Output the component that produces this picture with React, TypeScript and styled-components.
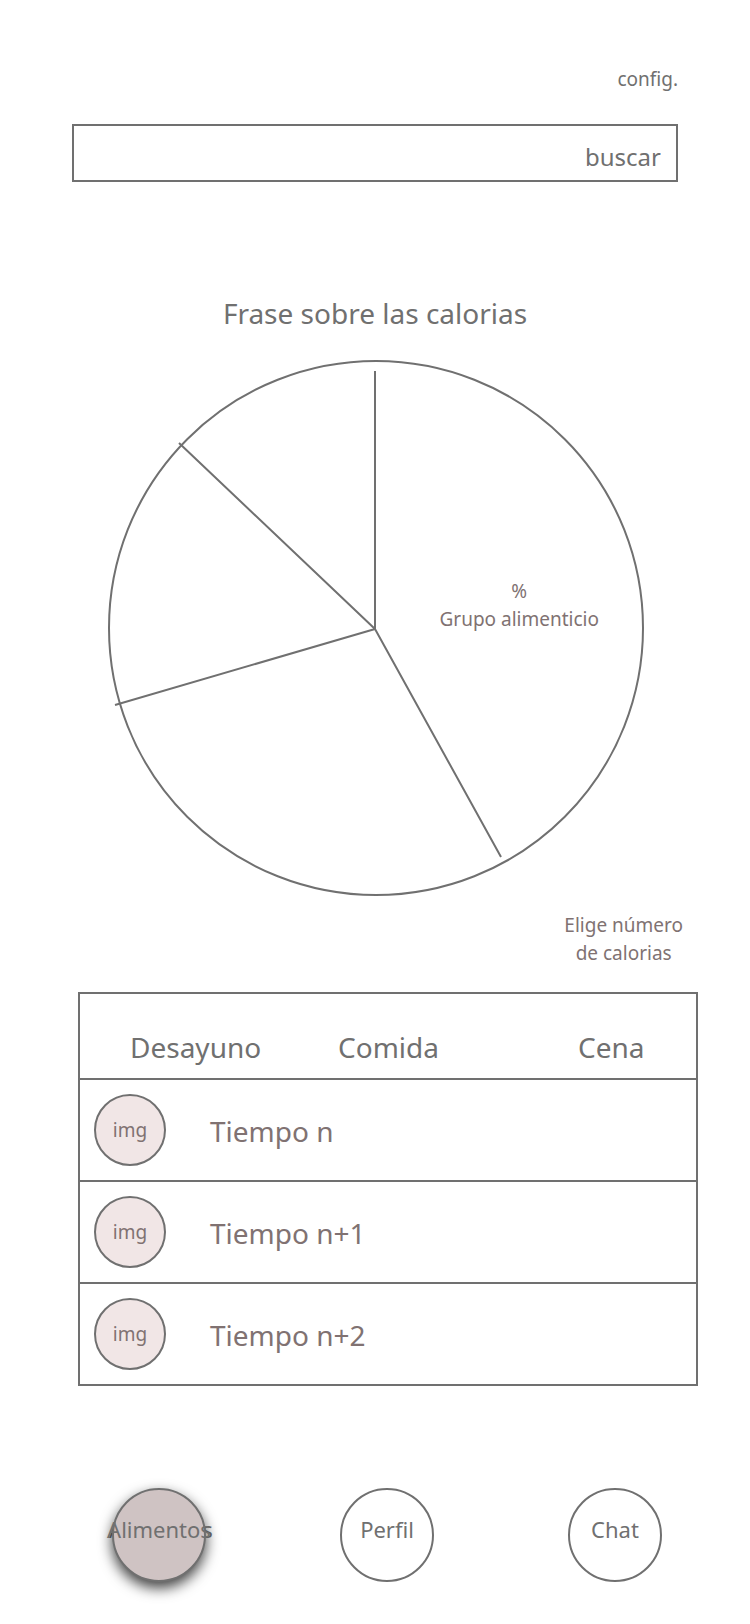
import React from 'react';
import styled, { createGlobalStyle, css } from 'styled-components';

const GREY = '#707070';
const MAUVE = '#807272';
const FONT = "'Noto Sans', 'Open Sans', sans-serif";

const GlobalStyle = createGlobalStyle`
  * { box-sizing: border-box; }
  body {
    margin: 0;
    background: #fff;
    color: ${GREY};
    font-family: ${FONT};
  }
  button {
    padding: 0;
    border: 0;
    background: none;
    color: inherit;
    font: inherit;
    cursor: pointer;
  }
`;

const Page = styled.main`
  display: flex;
  flex-direction: column;
  padding-bottom: 42px;
`;

const Header = styled.header`
  display: flex;
  flex-direction: column;
  gap: 31px;
  padding: 65px 72px 0;
`;

const ConfigLink = styled.a`
  align-self: flex-end;
  color: ${GREY};
  font-size: 19px;
  line-height: 28px;
  text-decoration: none;
`;

const SearchInput = styled.input`
  width: 100%;
  height: 58px;
  padding: 7px 15px 0;
  border: 2px solid ${GREY};
  border-radius: 0;
  background: #fff;
  color: ${GREY};
  font: 24px ${FONT};
  text-align: right;
  outline: none;
  &::placeholder {
    color: ${GREY};
    opacity: 1;
  }
`;

const Title = styled.h1`
  margin: 111px 0 27px;
  font-size: 28px;
  font-weight: 400;
  line-height: 40px;
  text-align: center;
`;

const Pie = styled.figure`
  position: relative;
  align-self: center;
  width: 536px;
  max-width: 100%;
  margin: 0;
`;

const PieDrawing = styled.svg`
  display: block;
  width: 100%;
  overflow: visible;
`;

const PieLabel = styled.figcaption`
  position: absolute;
  top: 217px;
  right: 44px;
  color: ${MAUVE};
  font-size: 19px;
  line-height: 28px;
  text-align: center;
`;

const CaloriesButton = styled.button`
  align-self: flex-end;
  margin: 15px 67px 25px 0;
  && {
    color: ${MAUVE};
    font-size: 19px;
    line-height: 28px;
  }
`;

const Meals = styled.section`
  margin: 0 52px 0 78px;
  border: 2px solid ${GREY};
`;

const MealTabs = styled.div`
  display: grid;
  grid-template-columns: 208fr 240fr 118fr;
  align-items: end;
  height: 84px;
  padding: 0 0 11px 50px;
`;

const MealTab = styled.button`
  justify-self: start;
  && {
    font-size: 28px;
    line-height: 40px;
  }
`;

const TimeList = styled.ul`
  margin: 0;
  padding: 0;
  list-style: none;
`;

const TimeRow = styled.li`
  display: flex;
  align-items: center;
  gap: 44px;
  padding: 14px;
  border-top: 2px solid ${GREY};
  color: ${MAUVE};
  font-size: 28px;
  line-height: 40px;
`;

const TimeName = styled.span`
  padding-top: 2px;
`;

const Thumb = styled.span`
  display: flex;
  align-items: center;
  justify-content: center;
  width: 72px;
  height: 72px;
  border: 2px solid ${GREY};
  border-radius: 50%;
  background: #f1e6e6;
  font-size: 19px;
  line-height: 28px;
`;

const Nav = styled.nav`
  display: flex;
  justify-content: space-between;
  margin-top: 102px;
  padding: 0 88px 0 112px;
`;

/* The active item carries a second copy of its label under the circle,
   seen only past the circle's edge. */
const NavItem = styled.div<{ $active: boolean }>`
  position: relative;
  z-index: 0;
  ${(p) =>
    p.$active &&
    css`
      &::before {
        content: attr(data-label);
        position: absolute;
        inset: 0 0 13px 4px;
        z-index: -1;
        display: flex;
        align-items: center;
        justify-content: center;
        font-size: 22px;
        line-height: 32px;
        white-space: nowrap;
      }
    `}
`;

const NavButton = styled.button<{ $active: boolean }>`
  && {
    display: flex;
    align-items: center;
    justify-content: center;
    width: 94px;
    height: 94px;
    padding-bottom: 13px;
    border: 2px solid ${GREY};
    border-radius: 50%;
    background: ${(p) => (p.$active ? '#cfc3c3' : '#fff')};
    box-shadow: ${(p) => (p.$active ? '0 6px 14px rgba(0, 0, 0, 0.75)' : 'none')};
    font-size: 22px;
    line-height: 32px;
    white-space: nowrap;
  }
`;

const times = ['Tiempo n', 'Tiempo n+1', 'Tiempo n+2'];
const meals = ['Desayuno', 'Comida', 'Cena'];
const sections = ['Alimentos', 'Perfil', 'Chat'];

export default function App() {
  const current = 'Alimentos';

  return (
    <>
      <GlobalStyle />
      <Page>
        <Header>
          <ConfigLink href="#config">config.</ConfigLink>
          <SearchInput type="text" aria-label="buscar" placeholder="buscar" />
        </Header>

        <Title>Frase sobre las calorias</Title>

        <Pie>
          <PieDrawing
            viewBox="0 0 536 536"
            fill="none"
            stroke={GREY}
            strokeWidth="2"
            aria-hidden="true"
          >
            <circle cx="269" cy="268" r="267" />
            <path d="M268 11V269M268 269L394 497M268 269L8 345M268 269L72 83" />
          </PieDrawing>
          <PieLabel>
            %<br />
            Grupo alimenticio
          </PieLabel>
        </Pie>

        <CaloriesButton type="button">
          Elige número
          <br />
          de calorias
        </CaloriesButton>

        <Meals>
          <MealTabs>
            {meals.map((meal) => (
              <MealTab key={meal} type="button">
                {meal}
              </MealTab>
            ))}
          </MealTabs>
          <TimeList>
            {times.map((time) => (
              <TimeRow key={time}>
                <Thumb>img</Thumb>
                <TimeName>{time}</TimeName>
              </TimeRow>
            ))}
          </TimeList>
        </Meals>

        <Nav>
          {sections.map((name) => (
            <NavItem key={name} $active={name === current} data-label={name}>
              <NavButton type="button" $active={name === current}>
                {name}
              </NavButton>
            </NavItem>
          ))}
        </Nav>
      </Page>
    </>
  );
}
